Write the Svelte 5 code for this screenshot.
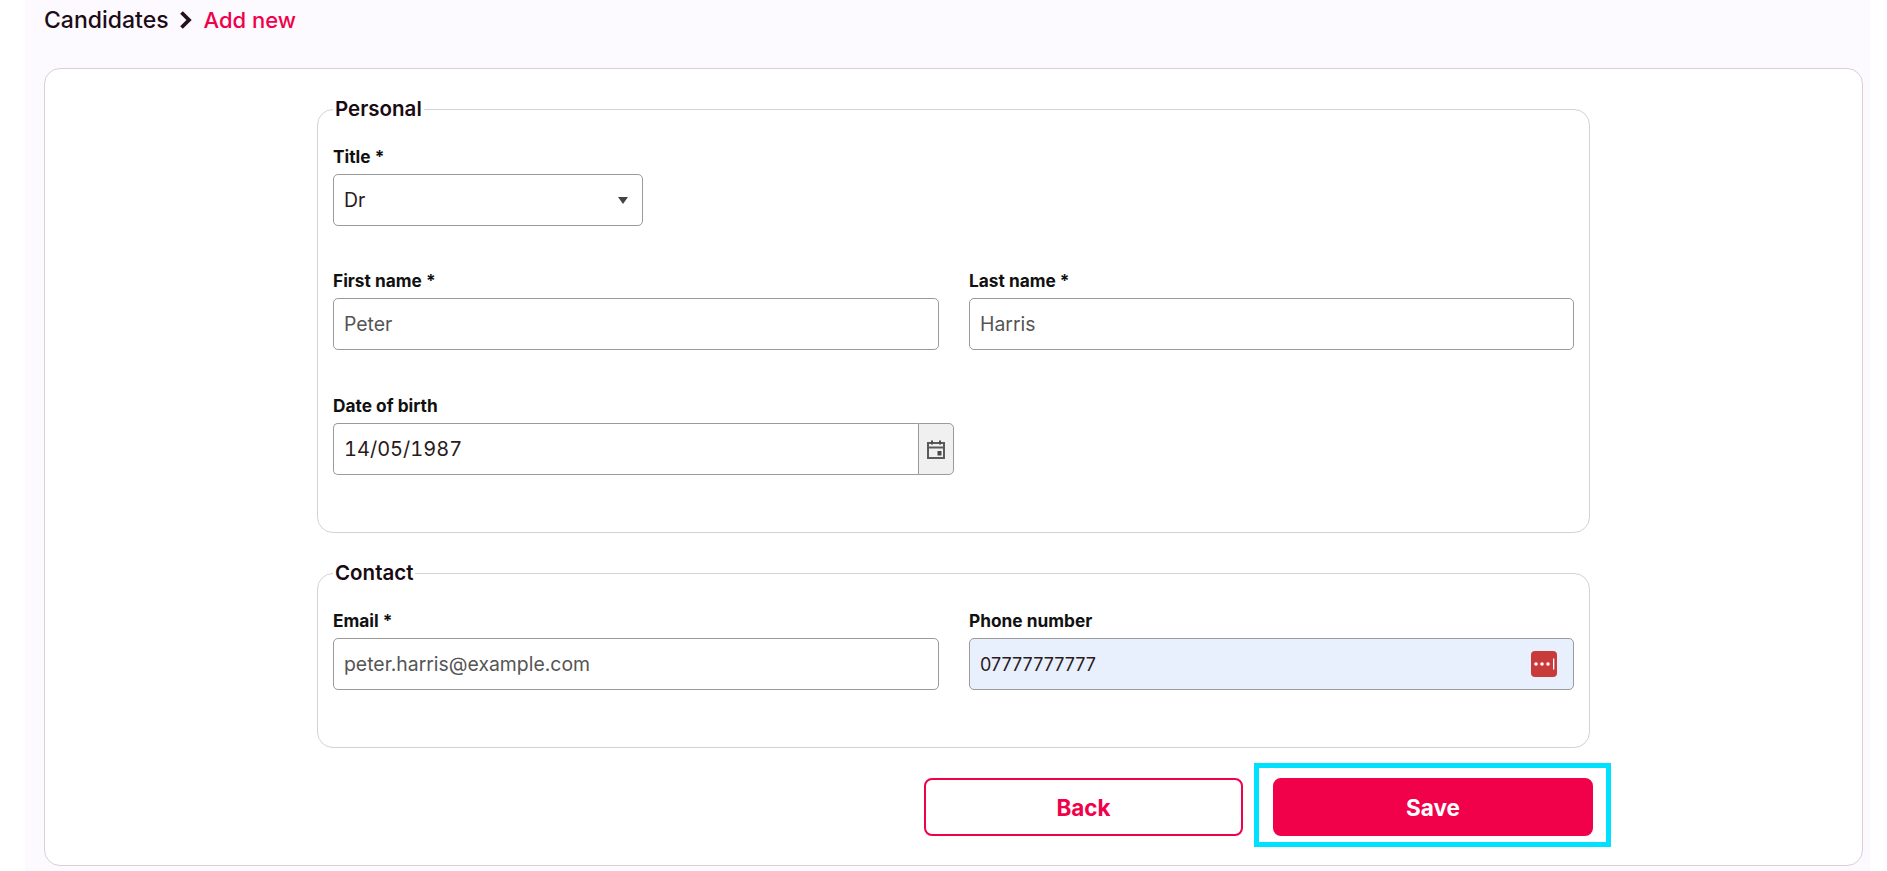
<script>
  let title = "Dr";
  let firstName = "Peter";
  let lastName = "Harris";
  let dob = "14/05/1987";
  let email = "peter.harris@example.com";
  let phone = "07777777777";
</script>

<div class="page">
  <nav class="crumbs">
    <span>Candidates</span>
    <svg class="chev" viewBox="0 0 14 18" width="14" height="18">
      <path d="M2.500 1.500 L10 9 L2.500 16.500" fill="none" stroke="#26101a" stroke-width="3.800" />
    </svg>
    <span class="current">Add new</span>
  </nav>

  <div class="card">
    <form class="form">
      <fieldset>
        <legend>Personal</legend>
        <div class="field title-field">
          <label for="title">Title *</label>
          <div class="select-wrap">
            <select id="title" bind:value={title}>
              <option>Mr</option>
              <option>Mrs</option>
              <option>Dr</option>
            </select>
            <span class="caret"></span>
          </div>
        </div>
        <div class="row">
          <div class="field">
            <label for="first">First name *</label>
            <input id="first" bind:value={firstName} />
          </div>
          <div class="field">
            <label for="last">Last name *</label>
            <input id="last" bind:value={lastName} />
          </div>
        </div>
        <div class="field dob-field">
          <label for="dob">Date of birth</label>
          <div class="date-wrap">
            <input id="dob" class="dark" bind:value={dob} />
            <button type="button" class="date-btn" aria-label="Pick date">
              <svg viewBox="0 0 18 20" width="18" height="20">
                <path d="M1 4h16v15H1z M1 8.500h16" fill="none" stroke="#5a5a5a" stroke-width="2" />
                <path d="M4 1.500h2v4H4z M12 1.500h2v4h-2z M10.500 12h4v4.500h-4z" fill="#4a4a4a" />
              </svg>
            </button>
          </div>
        </div>
      </fieldset>

      <fieldset class="contact">
        <legend>Contact</legend>
        <div class="row">
          <div class="field">
            <label for="email">Email *</label>
            <input id="email" bind:value={email} />
          </div>
          <div class="field">
            <label for="phone">Phone number</label>
            <div class="phone-wrap">
              <input id="phone" class="dark autofilled" bind:value={phone} />
              <svg class="pass" viewBox="0 0 26 26" width="26" height="26">
                <rect width="26" height="26" rx="4" fill="#c93a3a" />
                <circle cx="5" cy="13" r="1.800" fill="#fff" />
                <circle cx="11" cy="13" r="1.800" fill="#fff" />
                <circle cx="17" cy="13" r="1.800" fill="#fff" />
                <rect x="22" y="7.500" width="1.300" height="11" fill="#fff" />
              </svg>
            </div>
          </div>
        </div>
      </fieldset>

      <div class="actions">
        <button type="button" class="btn back">Back</button>
        <div class="save-wrap">
          <button type="button" class="btn save">Save</button>
          <span class="highlight"></span>
        </div>
      </div>
    </form>
  </div>
</div>

<style>
  :global(body) {
    margin: 0;
    background: #fff;
    font-family: Inter, "Noto Sans", sans-serif;
  }

  .page {
    margin: 0 17px 0 25px;
    height: 871px;
    box-sizing: border-box;
    padding: 0 7px 5px 19px;
    background: #fcfaff;
    display: flex;
    flex-direction: column;
    overflow: hidden;
  }

  .crumbs {
    height: 68px;
    flex: none;
    box-sizing: border-box;
    padding-top: 7px;
    display: flex;
    align-items: flex-start;
    gap: 10px;
    font-size: 23px;
    font-weight: 500;
    line-height: 26px;
    color: #1c0c16;
  }

  .chev {
    margin-top: 4px;
  }

  .current {
    color: #f0014a;
    margin-left: 1px;
    font-size: 22px;
  }

  .card {
    flex: 1;
    background: #fff;
    border: 1px solid #d9d0d4;
    border-radius: 16px;
  }

  .form {
    width: 1273px;
    margin: 0 auto;
    padding-top: 27px;
  }

  fieldset {
    margin: 0;
    padding: 0 15px 57px;
    border: 1px solid #d9d0d4;
    border-radius: 16px;
    min-width: 0;
    box-sizing: border-box;
  }

  .contact {
    margin-top: 27px;
  }

  legend {
    padding: 0 2px;
    font-size: 20.500px;
    font-weight: 600;
    line-height: 26px;
    color: #1a0a12;
  }

  .row {
    display: grid;
    grid-template-columns: 606px 605px;
    gap: 30px;
  }

  .field {
    display: flex;
    flex-direction: column;
  }

  label {
    font-size: 17.300px;
    font-weight: 700;
    line-height: 20px;
    margin-bottom: 7px;
    color: #111;
  }

  .title-field {
    margin-top: 25px;
    width: 310px;
    margin-bottom: 45px;
  }

  .row + .dob-field {
    margin-top: 46px;
  }

  .contact .row {
    margin-top: 25px;
  }

  .dob-field {
    width: 621px;
  }

  input,
  select {
    height: 52px;
    width: 100%;
    box-sizing: border-box;
    border: 1px solid #9a9a9a;
    border-radius: 5px;
    background: #fff;
    padding: 0 10px;
    font-family: inherit;
    font-size: 19.400px;
    color: #555;
    outline: none;
  }

  input.dark,
  select {
    color: #2a1a20;
  }

  #dob {
    font-size: 20px;
    font-variant-numeric: tabular-nums;
  }

  .autofilled {
    background: #e8f0fe;
    font-size: 18px;
  }

  select {
    appearance: none;
  }

  .select-wrap,
  .phone-wrap,
  .date-wrap {
    position: relative;
  }

  .caret {
    position: absolute;
    right: 15px;
    top: 23px;
    border-left: 5.500px solid transparent;
    border-right: 5.500px solid transparent;
    border-top: 7px solid #444;
    pointer-events: none;
  }

  .date-wrap {
    display: flex;
  }

  .date-wrap input {
    border-right: 0;
    border-radius: 5px 0 0 5px;
    flex: 1;
    min-width: 0;
  }

  .date-btn {
    width: 36px;
    height: 52px;
    flex: none;
    padding: 0;
    background: #f0f0f0;
    border: 1px solid #9a9a9a;
    border-radius: 0 5px 5px 0;
    display: flex;
    align-items: center;
    justify-content: center;
  }

  .pass {
    position: absolute;
    right: 17px;
    top: 13px;
  }

  .actions {
    display: flex;
    justify-content: flex-end;
    gap: 30px;
    margin-top: 30px;
    margin-right: -3px;
  }

  .btn {
    height: 58px;
    box-sizing: border-box;
    border-radius: 8px;
    border: 2px solid #f0014a;
    font-family: inherit;
    font-size: 22.500px;
    font-weight: 700;
  }

  .back {
    width: 319px;
    background: #fff;
    color: #f0014a;
  }

  .save {
    width: 320px;
    background: #f0014a;
    color: #fff;
    display: block;
  }

  .save-wrap {
    position: relative;
  }

  .highlight {
    position: absolute;
    left: -19px;
    right: -18px;
    top: -15px;
    bottom: -11px;
    border: 5px solid #00e1ff;
    pointer-events: none;
  }
</style>
